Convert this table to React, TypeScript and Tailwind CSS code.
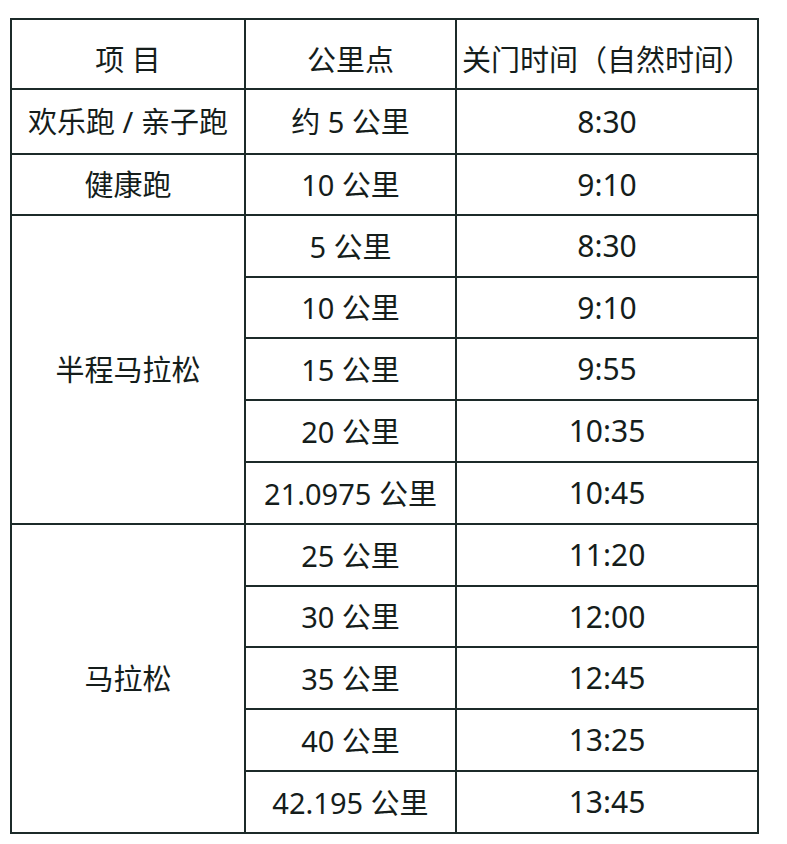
const rows: { name?: string; span?: number; km: string; time: string; h: string }[] = [
  { name: '欢乐跑 / 亲子跑', span: 1, km: '约 5 公里', time: '8:30', h: 'h-[65px]' },
  { name: '健康跑', span: 1, km: '10 公里', time: '9:10', h: 'h-[61px]' },
  { name: '半程马拉松', span: 5, km: '5 公里', time: '8:30', h: 'h-[62px]' },
  { km: '10 公里', time: '9:10', h: 'h-[61px]' },
  { km: '15 公里', time: '9:55', h: 'h-[62px]' },
  { km: '20 公里', time: '10:35', h: 'h-[62px]' },
  { km: '21.0975 公里', time: '10:45', h: 'h-[62px]' },
  { name: '马拉松', span: 5, km: '25 公里', time: '11:20', h: 'h-[62px]' },
  { km: '30 公里', time: '12:00', h: 'h-[61px]' },
  { km: '35 公里', time: '12:45', h: 'h-[62px]' },
  { km: '40 公里', time: '13:25', h: 'h-[62px]' },
  { km: '42.195 公里', time: '13:45', h: 'h-[62px]' },
]

export default function App() {
  return (
    <main
      className="min-h-screen bg-white text-[#151d1b]"
      style={{ fontFamily: '"Noto Sans", "Noto Sans CJK SC", sans-serif' }}
    >
      <div className="pl-[10px] pt-[18px]">
        <table className="table-fixed border-collapse border-2 border-[#1c2a29] text-[29px] leading-none">
          <colgroup>
            <col className="w-[234px]" />
            <col className="w-[211px]" />
            <col className="w-[302px]" />
          </colgroup>
          <thead>
            <tr className="h-[70px]">
              <th className="border-2 border-[#1c2a29] pt-[10px] text-center font-normal">项 目</th>
              <th className="border-2 border-[#1c2a29] pt-[10px] text-center font-normal">公里点</th>
              <th className="border-2 border-[#1c2a29] pt-[10px] text-center font-normal">
                关门时间（自然时间）
              </th>
            </tr>
          </thead>
          <tbody>
            {rows.map((r, i) => (
              <tr key={i} className={r.h}>
                {r.name && (
                  <td rowSpan={r.span} className="border-2 border-[#1c2a29] text-center">
                    {r.name}
                  </td>
                )}
                <td className="border-2 border-[#1c2a29] text-center">{r.km}</td>
                <td className="border-2 border-[#1c2a29] text-center text-[30px]">{r.time}</td>
              </tr>
            ))}
          </tbody>
        </table>
      </div>
    </main>
  )
}
